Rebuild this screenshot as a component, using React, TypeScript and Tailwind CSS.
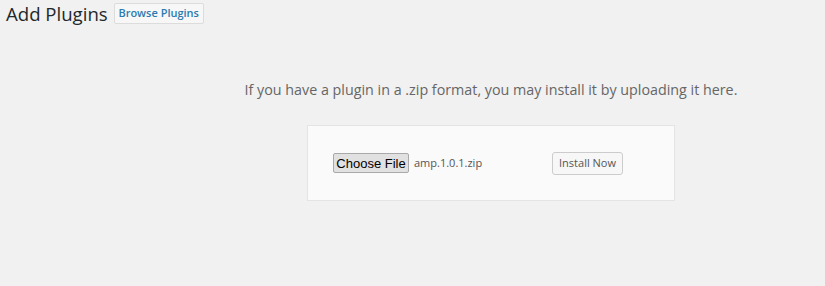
export default function App() {
  return (
    <div className="w-[825px] h-[286px] bg-[#f1f1f1] overflow-hidden" style={{ fontFamily: '"Open Sans", "Noto Sans", sans-serif' }}>
      {/* header */}
      <div className="flex items-center pl-[6px] pt-[3px]">
        <h1 className="text-[18.6px] leading-[21px] text-[#23282d]">Add Plugins</h1>
        <button
          type="button"
          className="ml-[6px] h-[21px] w-[90px] border border-[#dcdcdc] bg-[#f7f7f7] text-[11px] font-semibold text-[#2b7bb0] rounded-[2px]"
        >
          Browse Plugins
        </button>
      </div>

      {/* upload */}
      <div className="ml-[157px] flex flex-col items-center">
        <p className="mt-[56px] text-[14.3px] leading-[20px] text-[#666]">
          If you have a plugin in a .zip format, you may install it by uploading it here.
        </p>
        <div className="mt-[25px] w-[368px] h-[76px] bg-[#fafafa] border border-[#e4e4e4] flex items-center pl-[25px] pr-[51px]">
          <button
            type="button"
            className="h-[20px] w-[76px] border border-[#a9a9a9] bg-[#e1e1e1] rounded-[2px] text-[13px] text-black"
            style={{ fontFamily: '"Liberation Sans", Arial, sans-serif' }}
          >
            Choose File
          </button>
          <span className="ml-[5px] text-[11px] text-[#555]">amp.1.0.1.zip</span>
          <button
            type="button"
            className="ml-auto h-[23px] w-[71px] border border-[#ccc] bg-[#f7f7f7] rounded-[3px] text-[11px] text-[#555]"
          >
            Install Now
          </button>
        </div>
      </div>
    </div>
  );
}
